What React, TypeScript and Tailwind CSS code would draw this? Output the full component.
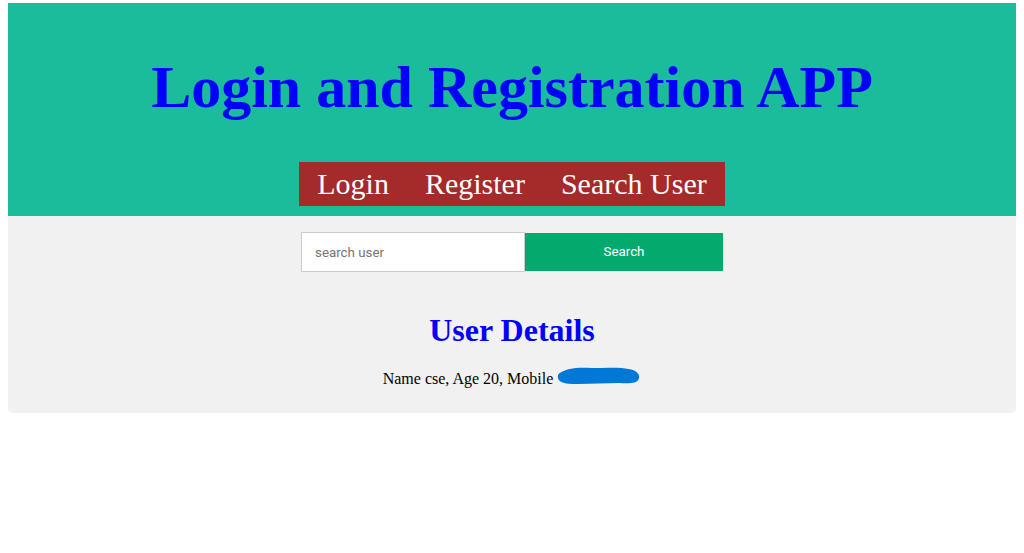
const serif = "font-['Liberation_Serif','Times_New_Roman',serif]";

const NavLink = ({ label }: { label: string }) => (
  <a href="#" className="px-[18px] text-white no-underline">
    {label}
  </a>
);

export default function App() {
  return (
    <div className="min-h-screen bg-white px-2 pt-[3px]">
      <div className="overflow-hidden rounded-b-[5px]">
        {/* Header */}
        <header className="flex flex-col items-center bg-[#1abc9c] pb-[10px]">
          <h1 className={`${serif} mt-[54px] text-[60px] font-bold leading-none text-[#0000ff]`}>
            Login and Registration APP
          </h1>
          <nav className={`${serif} mt-[45px] flex h-[44px] items-center bg-[#a52a2a] text-[30px] leading-[44px]`}>
            <NavLink label="Login" />
            <NavLink label="Register" />
            <NavLink label="Search User" />
          </nav>
        </header>

        {/* Search */}
        <main className="flex h-[197px] flex-col items-center bg-[#f1f1f1] pt-4">
          <div className="flex items-center">
            <input
              type="text"
              placeholder="search user"
              className="h-[40px] w-[224px] border border-[#cccccc] bg-white pl-[13px] font-['Roboto',sans-serif] text-[13.33px] text-black outline-none placeholder:text-[#757575]"
            />
            <button className="h-[38px] w-[198px] bg-[#04aa6d] font-['Roboto',sans-serif] text-[13.33px] text-white">
              Search
            </button>
          </div>

          <h2 className={`${serif} mt-[42px] text-[32px] font-bold leading-none text-[#0000ff]`}>
            User Details
          </h2>
          <p className={`${serif} mt-[25px] text-[16px] leading-none text-black`}>
            Name cse, Age 20, Mobile{" "}
            {/* hidden mobile number */}
            <svg
              className="-mt-[12px] inline-block align-[-3px]"
              width="84"
              height="22"
              viewBox="0 0 88 22"
              preserveAspectRatio="none"
            >
              <path
                d="M3 8 C 10 3, 22 2, 36 3 C 52 3, 66 2, 75 4 C 83 5, 87 9, 86 13 C 85 18, 77 19, 65 18 C 51 18, 37 19, 23 19 C 13 19, 5 19, 2 15 C 0 12, 1 9, 3 8 Z"
                fill="#0078d7"
              />
            </svg>
          </p>
        </main>
      </div>
    </div>
  );
}
